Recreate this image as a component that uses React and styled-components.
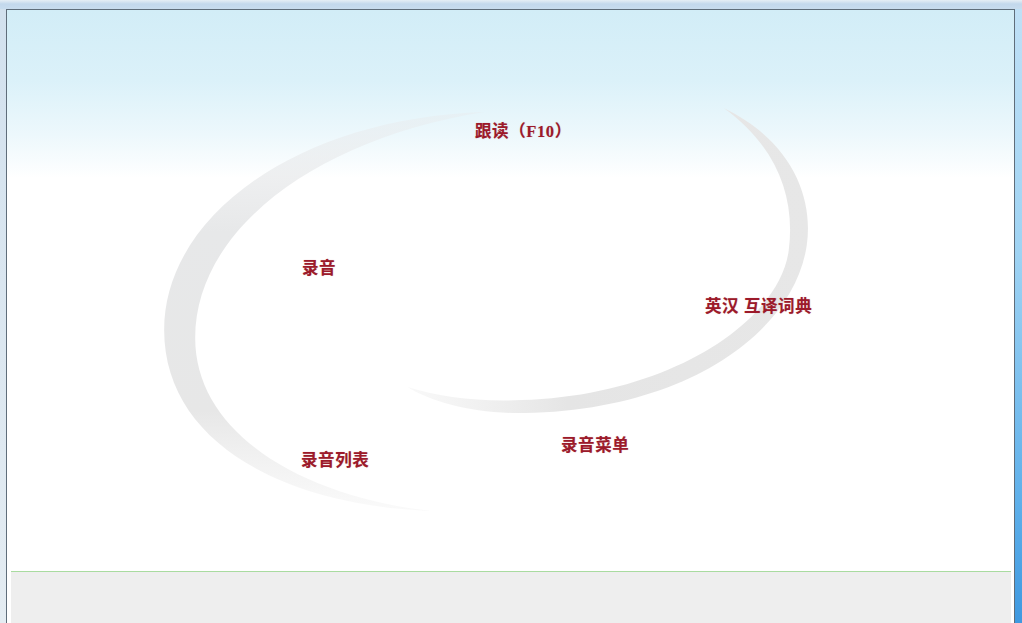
import React from "react";
import styled, { createGlobalStyle } from "styled-components";

const Global = createGlobalStyle`
  html, body { margin: 0; padding: 0; width: 1022px; height: 623px; overflow: hidden; }
  #root { width: 1022px; height: 623px; }
`;

const Window = styled.div`
  width: 1022px;
  height: 623px;
  display: flex;
  flex-direction: column;
  background: #dfe9f1;
`;

const TopStrip = styled.div`
  height: 9px;
  flex: none;
  background: linear-gradient(to bottom, #e6eef5 0px, #c3d8ec 4px, #c8dcee 9px);
`;

const Body = styled.div`
  flex: 1;
  display: flex;
  min-height: 0;
`;

const LeftEdge = styled.div`
  width: 6px;
  flex: none;
  background: linear-gradient(to bottom, #d2e1ee, #e4ecf2);
`;

const RightEdge = styled.div`
  width: 7px;
  flex: none;
  background: linear-gradient(to bottom, #bfe0f6 0%, #9fd3f3 40%, #5fb0ea 80%, #3f99e0 100%);
`;

const Panel = styled.div`
  flex: 1;
  display: flex;
  flex-direction: column;
  border: 1px solid #5f6d7a;
  border-bottom: none;
  background: #ffffff;
  min-width: 0;
`;

const Canvas = styled.div`
  position: relative;
  height: 561px;
  flex: none;
  overflow: hidden;
  background: linear-gradient(
    to bottom,
    #d2edf7 0px,
    #dbf1f9 70px,
    #edf8fc 125px,
    #ffffff 168px,
    #ffffff 100%
  );
`;

const Swoosh = styled.svg`
  position: absolute;
  left: 0;
  top: 0;
  width: 100%;
  height: 100%;
`;

const Label = styled.span`
  position: absolute;
  left: ${(p) => p.$x - 8}px;
  top: ${(p) => p.$y - 10}px;
  font-family: "Liberation Serif", "Noto Sans CJK SC", serif;
  font-weight: 700;
  font-size: 16.5px;
  line-height: 17px;
  letter-spacing: 0.6px;
  color: #9c1a2a;
  white-space: pre;
  text-shadow: 0 0 1px rgba(156, 26, 42, 0.35);
`;

const Footer = styled.div`
  flex: 1;
  margin: 0 3px 0 4px;
  background: #eeeeee;
  border-top: 1px solid #a9dba0;
`;

const labels = [
  { text: "跟读（F10）", x: 476, y: 123 },
  { text: "录音", x: 303, y: 260 },
  { text: "英汉 互译词典", x: 706, y: 298 },
  { text: "录音列表", x: 302, y: 452 },
  { text: "录音菜单", x: 562, y: 437 },
];

export default function App() {
  return (
    <>
      <Global />
      <Window>
        <TopStrip />
        <Body>
          <LeftEdge />
          <Panel>
            <Canvas>
              <Swoosh viewBox="0 0 1006 561" preserveAspectRatio="none">
                <defs>
                  <linearGradient id="lg" x1="0" y1="0" x2="0" y2="1">
                    <stop offset="0" stopColor="#e8eaec" stopOpacity="0.4" />
                    <stop offset="0.3" stopColor="#e7e8e9" />
                    <stop offset="0.75" stopColor="#e7e7e7" />
                    <stop offset="1" stopColor="#eeeeee" stopOpacity="0.3" />
                  </linearGradient>
                  <linearGradient id="rg" x1="0" y1="0" x2="1" y2="0">
                    <stop offset="0" stopColor="#eaeaea" stopOpacity="0.3" />
                    <stop offset="0.4" stopColor="#e5e5e5" />
                    <stop offset="1" stopColor="#e7e7e7" />
                  </linearGradient>
                </defs>
                <g transform="translate(-8,-10)">
                  <path
                    fill="url(#lg)"
                    d="M 485 112 C 300 118, 165 215, 165 330 C 165 440, 280 505, 432 511 C 300 496, 196 432, 196 338 C 196 228, 320 138, 485 112 Z"
                  />
                  <path
                    fill="url(#rg)"
                    d="M 724 108 C 790 140, 814 195, 807 245 C 795 330, 690 410, 525 413 C 475 414, 432 402, 408 387 C 440 397, 480 402, 522 400 C 668 396, 780 322, 789 250 C 796 195, 775 145, 724 108 Z"
                  />
                </g>
              </Swoosh>
              {labels.map((l) => (
                <Label key={l.text} $x={l.x} $y={l.y}>
                  {l.text}
                </Label>
              ))}
            </Canvas>
            <Footer />
          </Panel>
          <RightEdge />
        </Body>
      </Window>
    </>
  );
}
